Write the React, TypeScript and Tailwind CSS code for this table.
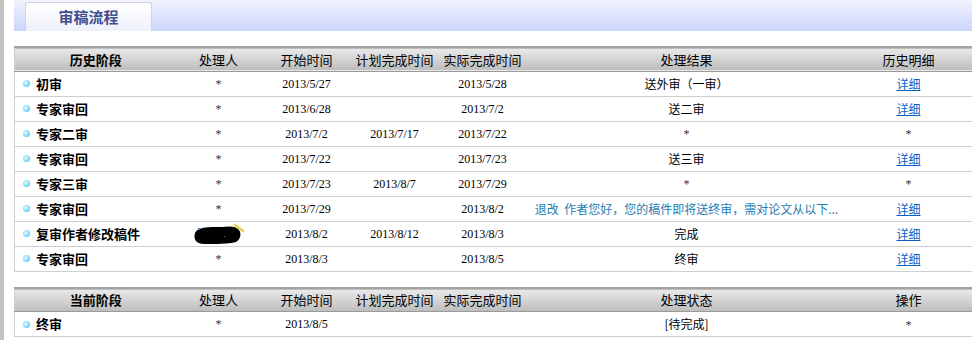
import React from "react";

type Row = {
  stage: string;
  handler: string;
  start: string;
  plan: string;
  actual: string;
  result: string;
  resultBlue?: boolean;
  detail: string;
};

const HISTORY: Row[] = [
  { stage: "初审", handler: "*", start: "2013/5/27", plan: "", actual: "2013/5/28", result: "送外审（一审）", detail: "详细" },
  { stage: "专家审回", handler: "*", start: "2013/6/28", plan: "", actual: "2013/7/2", result: "送二审", detail: "详细" },
  { stage: "专家二审", handler: "*", start: "2013/7/2", plan: "2013/7/17", actual: "2013/7/22", result: "*", detail: "*" },
  { stage: "专家审回", handler: "*", start: "2013/7/22", plan: "", actual: "2013/7/23", result: "送三审", detail: "详细" },
  { stage: "专家三审", handler: "*", start: "2013/7/23", plan: "2013/8/7", actual: "2013/7/29", result: "*", detail: "*" },
  {
    stage: "专家审回",
    handler: "*",
    start: "2013/7/29",
    plan: "",
    actual: "2013/8/2",
    result: "退改\u00a0\u00a0作者您好，您的稿件即将送终审，需对论文从以下...",
    resultBlue: true,
    detail: "详细",
  },
  { stage: "复审作者修改稿件", handler: "blot", start: "2013/8/2", plan: "2013/8/12", actual: "2013/8/3", result: "完成", detail: "详细" },
  { stage: "专家审回", handler: "*", start: "2013/8/3", plan: "", actual: "2013/8/5", result: "终审", detail: "详细" },
];

const CJK = "font-['Noto_Sans_CJK_SC','Noto_Sans',sans-serif]";
const SERIF = "font-['Liberation_Serif','Noto_Sans_CJK_SC',serif]";

function Bullet() {
  return (
    <span className="inline-block h-[7px] w-[7px] rounded-full bg-[radial-gradient(circle_at_40%_40%,#e8fbff_0%,#8ee3fb_45%,#3fb3ea_100%)]" />
  );
}

function Blot() {
  return (
    <svg width="54" height="24" viewBox="0 0 54 24" className="inline-block">
      <path d="M3 11 C6 4, 20 5, 30 5 C38 4, 44 4, 47 8 C50 12, 48 18, 44 20 C36 22, 24 22, 12 22 C5 22, 1 18, 3 11 Z" fill="#000" />
      <path d="M43 3 L51 9" stroke="#e8d24a" strokeWidth="2.5" strokeLinecap="round" />
      <rect x="6" y="6" width="2" height="2" fill="#3a7fd0" />
      <rect x="32" y="14" width="1" height="1" fill="#666" />
    </svg>
  );
}

function HeaderRow({ labels }: { labels: string[] }) {
  return (
    <tr className="h-[24px] border-t-2 border-t-[#a3a3a3] border-b border-b-[#9a9a9a] bg-[linear-gradient(#e9e9e9,#bdbdbd)]">
      {labels.map((l, i) => (
        <th
          key={l}
          className={`p-0 text-center text-[13px] text-black ${i === 0 ? "font-bold" : "font-normal"}`}
        >
          {l}
        </th>
      ))}
    </tr>
  );
}

function Cells({ r }: { r: Row }) {
  return (
    <tr className="h-[25px] border-b border-[#cfcfcf]">
      <td className="p-0 pl-[8px]">
        <div className="flex items-center gap-[6px]">
          <Bullet />
          <span className="text-[13px] font-bold text-black">{r.stage}</span>
        </div>
      </td>
      <td className={`p-0 text-center ${SERIF} text-[12px] text-[#333]`}>
        {r.handler === "blot" ? <Blot /> : r.handler}
      </td>
      <td className={`p-0 text-center ${SERIF} text-[12px] text-black`}>{r.start}</td>
      <td className={`p-0 text-center ${SERIF} text-[12px] text-black`}>{r.plan}</td>
      <td className={`p-0 text-center ${SERIF} text-[12px] text-black`}>{r.actual}</td>
      <td
        className={`p-0 text-center text-[12px] ${
          r.result === "*" ? `${SERIF} text-[#333]` : r.resultBlue ? "text-[#1f7db4]" : "text-black"
        }`}
      >
        {r.result}
      </td>
      <td className="p-0 text-center text-[12px]">
        {r.detail === "*" ? (
          <span className={`${SERIF} text-[#333]`}>*</span>
        ) : (
          <a href="#" className="text-[#0a5fc6] underline">
            {r.detail}
          </a>
        )}
      </td>
    </tr>
  );
}

function Cols() {
  return (
    <colgroup>
      <col className="w-[162px]" />
      <col className="w-[84px]" />
      <col className="w-[92px]" />
      <col className="w-[84px]" />
      <col className="w-[92px]" />
      <col className="w-[316px]" />
      <col className="w-[128px]" />
    </colgroup>
  );
}

export default function App() {
  return (
    <div className={`flex h-[340px] w-[972px] overflow-hidden bg-white ${CJK}`}>
      <div className="w-[4px] shrink-0 bg-[#c3c3c3]" />
      <div className="w-[10px] shrink-0" />
      <div className="flex min-w-0 flex-1 flex-col">
        <div className="flex h-[31px] shrink-0 items-end bg-[linear-gradient(#f3f3ff,#cad4fb)] pl-[11px]">
          <div className="flex h-[29px] w-[127px] items-center justify-center rounded-t-[3px] border border-b-0 border-[#cfd3e6] bg-[linear-gradient(#ffffff,#eef0fb)]">
            <span className="text-[15px] font-bold text-[#41508f]">审稿流程</span>
          </div>
        </div>
        <div className="h-[15px] shrink-0" />
        <table className="w-[958px] table-fixed border-collapse border-l border-l-[#cfcfcf]">
          <Cols />
          <thead>
            <HeaderRow labels={["历史阶段", "处理人", "开始时间", "计划完成时间", "实际完成时间", "处理结果", "历史明细"]} />
          </thead>
          <tbody>
            {HISTORY.map((r, i) => (
              <Cells key={i} r={r} />
            ))}
          </tbody>
        </table>
        <div className="h-[15px] shrink-0" />
        <table className="w-[958px] table-fixed border-collapse border-l border-l-[#cfcfcf]">
          <Cols />
          <thead>
            <HeaderRow labels={["当前阶段", "处理人", "开始时间", "计划完成时间", "实际完成时间", "处理状态", "操作"]} />
          </thead>
          <tbody>
            <Cells
              r={{ stage: "终审", handler: "*", start: "2013/8/5", plan: "", actual: "", result: "[待完成]", detail: "*" }}
            />
          </tbody>
        </table>
      </div>
    </div>
  );
}
